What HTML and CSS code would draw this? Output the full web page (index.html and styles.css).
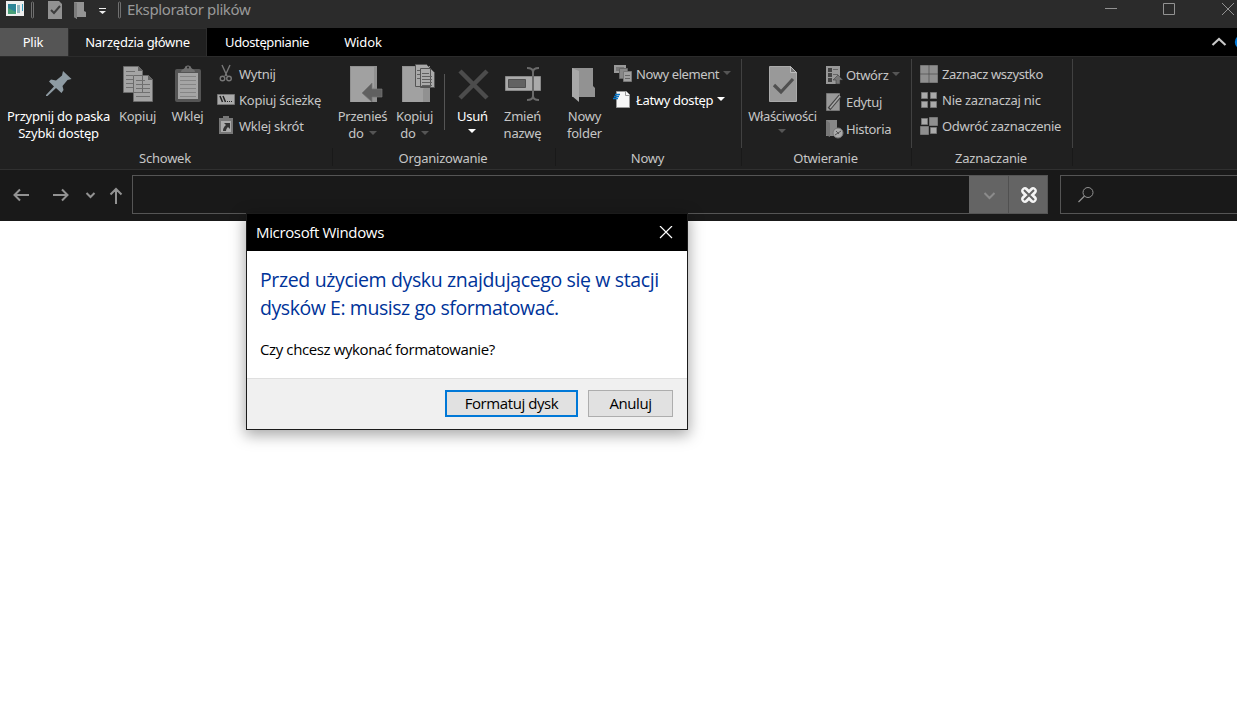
FILE: index.html
```html
<!DOCTYPE html>
<html lang="pl">
<head>
<meta charset="utf-8">
<title>Eksplorator plików</title>
<link rel="stylesheet" href="styles.css">
</head>
<body>
<header class="titlebar">
  <svg class="quick" width="124" height="28" viewBox="0 0 124 28">
    <path fill="#eee" d="M6 1h18v15H6z"/><path fill="#2c8497" d="M8 4h8v10H8z"/><path fill="#49a078" d="M8 8l8 4v2H8z"/><path fill="#8fb6bd" d="M17 5h3v8h-3z"/><path fill="#fff" d="M16 4h1v10h-1z"/><path fill="#3a9fc0" d="M22 4h1v7h-1z"/>
    <path fill="none" stroke="#707070" d="M31.500 2.500q1-1 2 0v15q-1 1-2 0zM118.500 2.500q1-1 2 0v15q-1 1-2 0z"/>
    <path fill="#929292" d="M48 1h11l3 3v15H48z"/><path fill="none" stroke="#3d3d3d" stroke-width="2" d="M51 10l3 3 6-7"/>
    <path fill="#949494" d="M74 2h10v9l2 1v5h-9v2l-3-2z"/><path fill="#7d7d7d" d="M74 2l3 1v16l-3-2z"/>
    <path stroke="#eee" d="M99 8.500h7"/><path fill="#eee" d="M99 11h7l-3.500 3z"/>
  </svg>
  <span class="window-title">Eksplorator plików</span>
  <svg class="controls" width="140" height="28" viewBox="0 0 140 28" fill="none" stroke="#929292">
    <path d="M8 8.500h12M66.500 3.500h11v11h-11zM125 3l12 12M137 3l-12 12"/>
  </svg>
</header>
<nav class="tabs">
  <span class="tab file">Plik</span><span class="tab home">Narzędzia główne</span><span class="tab share">Udostępnianie</span><span class="tab view">Widok</span>
  <svg class="tab-end" width="30" height="28" viewBox="0 0 30 28"><path fill="none" stroke="#c8c8c8" stroke-width="2.200" d="M5.500 17l6.500-6 6.500 6"/><circle cx="35" cy="14" r="7.200" fill="#0078d7"/></svg>
</nav>
<main class="ribbon">
  <section class="group clipboard">
    <div class="tools">
      <div class="big pin on"><svg width="48" height="44" viewBox="0 0 48 44"><path fill="#8e9ba3" d="M28 7l8.500 8-4 1-5 6 1 4-2 3-5.500-5-8.500 8H11v-1l8-8.500-5-5 2-2 5 1 6-5z"/></svg><span>Przypnij do paska</span><span>Szybki dostęp</span></div>
      <div class="big copy"><svg width="40" height="44" viewBox="0 0 40 44"><g fill="#a4a4a4" stroke="#6b6b6b"><path d="M5.500 2.500h15l4 4v22h-19zM15.500 11.500h15l4 4v22h-19z"/></g><path stroke="#707070" d="M8 7.500h9M8 11.500h7M8 15.500h7M8 19.500h7M8 23.500h7M18 16.500h9M18 20.500h14M18 24.500h14M18 28.500h14M18 32.500h14"/><path fill="#646464" d="M20 2v5h5zM30 11v5h5z"/></svg><span>Kopiuj</span></div>
      <div class="big paste"><svg width="40" height="44" viewBox="0 0 40 44"><rect x="7" y="5" width="26" height="33" rx="2" fill="#555"/><path fill="#a5a5a5" d="M10 9h20v26H10z"/><path stroke="#858585" d="M12 12.500h16M12 16.500h16M12 20.500h16M12 24.500h16M12 28.500h16M12 32.500h16"/><path fill="#707070" d="M13 8c0-3 4-3 4-5 1-2 5-2 6 0 0 2 4 2 4 5z"/><circle cx="20" cy="3.500" r="1" fill="#222"/></svg><span>Wklej</span></div>
      <div class="stack">
        <div class="row"><svg width="22" height="20" viewBox="0 0 22 20" fill="none" stroke="#777" stroke-width="1.400"><path d="M5 1l5 11M13 1L8 12"/><circle cx="5.500" cy="14.500" r="2.300"/><circle cx="12" cy="14.500" r="2.300"/></svg><span class="cut">Wytnij</span></div>
        <div class="row"><svg width="22" height="20" viewBox="0 0 22 20"><path fill="#aaa" stroke="#777" d="M.5 4.500h17v10H.5z"/><path stroke="#222" stroke-width="1.500" d="M3 6l2.500 6M6 6l2.500 6"/><path fill="#222" d="M10 11h1v1h-1zM12 11h1v1h-1zM14 11h1v1h-1z"/></svg><span class="path">Kopiuj ścieżkę</span></div>
        <div class="row"><svg width="22" height="20" viewBox="0 0 22 20"><path fill="#777" d="M2 2h14v16H2zM6 0h6v4H6z"/><path fill="#ababab" d="M4 5h10v11H4z"/><path fill="#333" d="M7 7h6v6l-2-2c-1 1-2 2-2 4H6c0-3 1-4 3-6z"/></svg><span class="shortcut">Wklej skrót</span></div>
      </div>
    </div>
    <footer>Schowek</footer>
  </section>
  <section class="group organize">
    <div class="tools">
      <div class="big move"><svg width="44" height="44" viewBox="0 0 44 44"><path fill="#919191" d="M9 2h27v36H9z"/><path fill="#a1a1a1" d="M10 3h23v20l-3 3v12H10z"/><path fill="#606060" stroke="#767676" stroke-width=".7" d="M21 29l10-10v6h10v8H31v5z"/></svg><span>Przenieś</span><span>do <i></i></span></div>
      <div class="big copyto"><svg width="44" height="44" viewBox="0 0 44 44"><path fill="#919191" d="M9 2h28v36H9z"/><path fill="#a1a1a1" d="M10 3h22v20l-2 2v13H10z"/><path fill="#aaa" stroke="#555" d="M22.500.5h11l4 4v18h-15zM27.500 4.500h10l4 4v15h-14z"/><path stroke="#606060" d="M24 6.500h3M24 10.500h3M24 14.500h3M29 9.500h7M29 12.500h10M29 15.500h10M29 18.500h10M29 21.500h10"/></svg><span>Kopiuj</span><span>do <i></i></span></div>
      <b class="divider"></b>
      <div class="big delete on"><svg width="44" height="44" viewBox="0 0 44 44"><path fill="none" stroke="#4c4c4c" stroke-width="4.500" d="M9 7l27 27M36 7L9 34"/></svg><span>Usuń</span><span class="drop"><i></i></span></div>
      <div class="big rename"><svg width="44" height="44" viewBox="0 0 44 44"><path fill="#aaa" stroke="#888" d="M4.500 12.500h35v14h-35z"/><path fill="#626262" stroke="#505050" d="M7.500 15.500h17v8h-17z"/><path fill="none" stroke="#6a6a6a" stroke-width="2" d="M26 4c4 0 6 1 6 4v24c0 3-2 4-6 4M38 4c-4 0-6 1-6 4m0 24c0 3 2 4 6 4"/></svg><span>Zmień</span><span>nazwę</span></div>
    </div>
    <footer>Organizowanie</footer>
  </section>
  <section class="group new ruled">
    <div class="tools">
      <div class="big folder"><svg width="44" height="44" viewBox="0 0 44 44"><path fill="#929292" d="M9 4h21v18l2 2v9H9z"/><path fill="#a8a8a8" d="M9 4l7 3v31l-7-6z"/></svg><span>Nowy</span><span>folder</span></div>
      <div class="stack">
        <div class="row"><svg width="23" height="20" viewBox="0 0 23 20"><path fill="#777" stroke="#999" stroke-width="2" d="M2 2h10v6H2z"/><path fill="#888" stroke="#666" d="M6.500 4.500h8v10h-8z"/><path fill="#a1a1a1" stroke="#777" d="M10.500 7.500h8v10h-8z"/><path stroke="#666" d="M12 11.500h5M12 14.500h5"/></svg><span class="item">Nowy element</span><i></i></div>
        <div class="row on"><svg width="23" height="20" viewBox="0 0 23 20"><path fill="#f8f8f8" stroke="#999" d="M3.500 1.500h10l3 3v13h-13z"/><path fill="none" stroke="#999" d="M12.500 2v3.500h4"/><path stroke="#0875c5" stroke-width="1.400" d="M2 4.500h5M1 6.500h5M0 8.500h5"/></svg><span class="easy">Łatwy dostęp</span><i></i></div>
      </div>
    </div>
    <footer>Nowy</footer>
  </section>
  <section class="group open ruled">
    <div class="tools">
      <div class="big props"><svg width="44" height="44" viewBox="0 0 44 44"><path fill="#999" stroke="#aaa" d="M8.500 2.500h21l6 6v29h-27z"/><path fill="#777" stroke="#bbb" d="M29.500 2.500v6h6z"/><path fill="none" stroke="#505050" stroke-width="3.200" d="M13 21l7 7 12-13"/></svg><span>Właściwości</span><span class="drop"><i></i></span></div>
      <div class="stack">
        <div class="row"><svg width="20" height="20" viewBox="0 0 20 20"><path fill="#999" d="M0 1h14v18H0z"/><path fill="#444" d="M2 3h4v4H2zM2 8h4v4H2zM2 13h4v4H2z"/><path stroke="#666" d="M7 4.500h5M7 9.500h5"/><path fill="#777" stroke="#333" stroke-width=".5" d="M7 15l5-5 5 5h-3v4h-4v-4z"/></svg><span class="opn">Otwórz</span><i></i></div>
        <div class="row"><svg width="20" height="20" viewBox="0 0 20 20"><path fill="#999" stroke="#777" d="M.5 1.500h13v17H.5z"/><path stroke="#444" stroke-width="3.500" d="M3 17L14 4"/><path stroke="#aaa" stroke-width="1.500" d="M4 16L14 4"/></svg><span class="edit">Edytuj</span></div>
        <div class="row"><svg width="20" height="20" viewBox="0 0 20 20"><path fill="#888" d="M0 1h11v16H0z"/><path fill="#777" d="M0 1l4 3v14l-4-2z"/><circle cx="12" cy="14" r="5" fill="#aaa" stroke="#777"/><path stroke="#555" d="M9 16l6-4M10 12l3 3"/></svg><span class="hist">Historia</span></div>
      </div>
    </div>
    <footer>Otwieranie</footer>
  </section>
  <section class="group select ruled">
    <div class="tools">
      <div class="stack">
        <div class="row"><svg width="22" height="20" viewBox="0 0 22 20"><path fill="#8f8f8f" stroke="#777" d="M.5 1.500h8v8h-8zM9.500 1.500h8v8h-8zM.5 10.500h8v8h-8zM9.500 10.500h8v8h-8z"/></svg><span class="all">Zaznacz wszystko</span></div>
        <div class="row"><svg width="22" height="20" viewBox="0 0 22 20"><path fill="#aaa" stroke="#777" d="M1.500 2.500h6v6h-6zM10.500 2.500h6v6h-6zM1.500 11.500h6v6h-6zM10.500 11.500h6v6h-6z"/></svg><span class="none">Nie zaznaczaj nic</span></div>
        <div class="row"><svg width="22" height="20" viewBox="0 0 22 20"><path fill="#aaa" stroke="#777" d="M1.500 2.500h6v6h-6zM10.500 11.500h6v6h-6z"/><path fill="#8f8f8f" stroke="#777" d="M9.500 1.500h8v8h-8zM.5 10.500h8v8h-8z"/></svg><span class="invert">Odwróć zaznaczenie</span></div>
      </div>
    </div>
    <footer>Zaznaczanie</footer>
  </section>
</main>
<div class="address">
  <svg class="arrows" width="132" height="51" viewBox="0 0 132 51" fill="none" stroke="#929292" stroke-width="2"><path d="M29 25H14.500m5.500-5.500L14.500 25l5.500 5.500M53 25h14.500M62 19.500l5.500 5.500-5.500 5.500M86.500 23l4 4 4-4M116 34V19m-5.500 5.500L116 19l5.500 5.500"/></svg>
  <div class="location"><div class="chev"><svg width="39" height="37" viewBox="0 0 39 37"><path fill="none" stroke="#8b8b8b" stroke-width="2" d="M15.500 17l5 5 5-5"/></svg></div><div class="stop"><svg width="38" height="37" viewBox="0 0 38 37"><path stroke="#f4f4f4" stroke-width="7.500" stroke-linecap="round" d="M16 15l8 8M24 15l-8 8"/><path stroke="#646464" stroke-width="2" d="M15 14l10 10M25 14l-10 10"/></svg></div></div>
  <div class="search"><svg width="50" height="37" viewBox="0 0 50 37"><circle cx="27" cy="16.500" r="5" fill="none" stroke="#929292"/><path stroke="#929292" stroke-width="1.200" d="M23.500 20L17.500 26"/></svg></div>
</div>
<div class="dialog">
  <div class="dialog-title"><span>Microsoft Windows</span><svg width="14" height="14" viewBox="0 0 14 14"><path stroke="#fff" stroke-width="1.200" d="M1 0l12 12M13 0L1 12"/></svg></div>
  <div class="dialog-body"><h1><span class="l1">Przed użyciem dysku znajdującego się w stacji</span><br><span class="l2">dysków E: musisz go sformatować.</span></h1><p>Czy chcesz wykonać formatowanie?</p></div>
  <div class="dialog-actions"><button class="primary">Formatuj dysk</button><button class="cancel">Anuluj</button></div>
</div>
</body>
</html>
```
FILE: styles.css
```css
* { box-sizing: border-box; }
body { margin: 0; height: 722px; overflow: hidden; background: #fff; font: 13px/17px "Noto Sans", "Open Sans", sans-serif; position: relative; }
svg { display: block; flex: none; }
.titlebar { height: 28px; background: #2b2b2b; display: flex; }
.window-title { margin-left: 3px; font-size: 15px; line-height: 19px; color: #999; letter-spacing: -.38px; white-space: nowrap; }
.controls { margin-left: auto; }
.tabs { height: 28px; display: flex; background: #000; color: #fff; }
.tab { height: 28px; line-height: 28px; text-align: center; white-space: nowrap; }
.file { width: 68px; background: #555; padding-right: 2px; letter-spacing: -.2px; }
.home { width: 139px; background: #202020; border: solid #2d2d2d; border-width: 1px 1px 0; line-height: 27px; letter-spacing: -.25px; }
.share { width: 120px; letter-spacing: -.4px; }
.view { width: 72px; letter-spacing: -.1px; }
.tab-end { margin-left: auto; }
.ribbon { height: 114px; display: flex; background: #202020; border-top: 1px solid #2b2b2b; border-bottom: 1px solid #303030; color: #c6c6c6; letter-spacing: -.24px; }
.group { display: flex; flex-direction: column; position: relative; padding-top: 6px; white-space: nowrap; }
.group::after { content: ""; position: absolute; right: 0; top: 91px; width: 1px; height: 18px; background: #191919; }
.ruled::after { top: 2px; height: 107px; background: linear-gradient(#414141 89px, #191919 89px); }
.clipboard { width: 333px; }
.organize { width: 223px; }
.new { width: 186px; }
.open { width: 170px; }
.select { width: 161px; }
.group footer { text-align: center; line-height: 18px; padding-right: 3px; }
.tools { height: 86px; display: flex; }
.big { display: flex; flex-direction: column; align-items: center; }
.big svg { margin-top: 1px; }
.on { color: #fff; }
.pin { width: 117px; }
.copy { width: 41px; }
.paste { width: 59px; }
.organize .tools { padding-left: 4px; }
.move { width: 51px; }
.copyto { width: 53px; }
.divider { width: 1px; height: 56px; margin: 11px 0 0 3px; background: #555; }
.delete { width: 55px; }
.rename { width: 45px; }
.folder { width: 57px; }
.props { width: 81px; letter-spacing: -.36px; }
.open .stack { padding: 1px 0 0 3px; }
.open .row { height: 27px; }
.select .stack { padding-left: 8px; }
.row { height: 26px; display: flex; align-items: flex-start; line-height: 22px; }
.row svg { margin-top: 1px; }
.item { letter-spacing: -.4px; }
.easy, .opn, .edit, .hist { letter-spacing: -.33px; }
.all { letter-spacing: -.37px; }
.invert { letter-spacing: -.28px; }
i { display: inline-block; border: 4px solid transparent; border-top-color: #555; border-bottom: 0; vertical-align: 3px; margin-left: 2px; }
.on i { border-top-color: #fff; }
.row i { margin: 8px 0 0 4px; }
.drop { line-height: 13px; }
.drop i { margin: 0 1px 0 0; }
.address { height: 51px; display: flex; align-items: flex-start; background: #191919; }
.location { width: 916px; height: 39px; margin-top: 5px; border: 1px solid #555; display: flex; justify-content: flex-end; }
.chev, .stop { background: #646464; }
.stop { border-left: 1px solid #505050; }
.search { width: 177px; height: 39px; margin: 5px 0 0 12px; border: 1px solid #555; border-right: 0; }
.dialog { position: absolute; left: 246px; top: 213px; width: 442px; height: 217px; border: 1px solid #1b1b1b; background: #fff; box-shadow: 0 4px 14px 1px rgba(0,0,0,.35); display: flex; flex-direction: column; font-family: "Open Sans", "Noto Sans", sans-serif; color: #000; white-space: nowrap; }
.dialog-title { height: 37px; background: #000; color: #fff; display: flex; justify-content: space-between; align-items: center; padding: 0 14px 0 9px; font-size: 15px; letter-spacing: -.35px; }
.dialog-body { height: 127px; padding: 15px 13px 0; }
h1 { margin: 0; font-size: 19.5px; line-height: 28px; font-weight: 400; color: #003399; }
.l1 { letter-spacing: -.36px; }
.l2 { letter-spacing: -.44px; }
p { margin: 17px 0 0; font-size: 15px; line-height: 20px; letter-spacing: -.39px; }
.dialog-actions { flex: 1; background: #f0f0f0; border-top: 1px solid #dfdfdf; display: flex; justify-content: flex-end; align-items: flex-start; gap: 10px; padding: 11px 14px 0; }
button { height: 27px; padding: 0 0 2px; background: #e1e1e1; border: 1px solid #adadad; color: #000; font: 15px/20px "Open Sans", "Noto Sans", sans-serif; letter-spacing: -.42px; }
.primary { width: 133px; border: 2px solid #0078d7; }
.cancel { width: 85px; }
```
